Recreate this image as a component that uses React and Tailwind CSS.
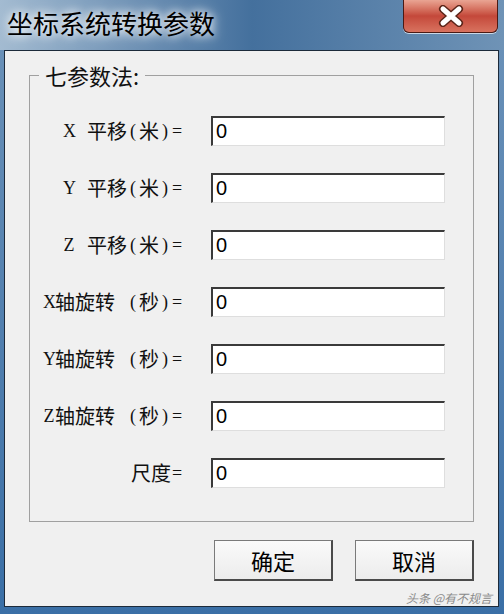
import React from "react";

const rows = [
  "X 平移(米)=",
  "Y 平移(米)=",
  "Z 平移(米)=",
  "X轴旋转 (秒)=",
  "Y轴旋转 (秒)=",
  "Z轴旋转 (秒)=",
  "尺度=",
];

// ASCII chars get a fixed cell, like the old SimSun look
function Label({ text }) {
  return (
    <div className="w-[153px] h-[30px] flex items-center justify-end text-[20px] leading-[30px] text-[#111] whitespace-nowrap">
      {text.split("").map((c, i) =>
        c.charCodeAt(0) < 128 ? (
          <span
            key={i}
            className="w-[12px] shrink-0 text-center text-[18px] [font-family:'Liberation_Serif',serif]"
          >
            {c === " " ? "\u00a0" : c}
          </span>
        ) : (
          <span key={i} className="shrink-0">{c}</span>
        )
      )}
    </div>
  );
}

function CloseButton() {
  return (
    <div className="w-[95px] h-[33px] mr-[6px] rounded-b-[6px] border border-t-0 border-[#4a1a14] bg-gradient-to-b from-[#e9a493] via-[#c4483a] to-[#d8725f] flex items-center justify-center shadow-[0_1px_0_#c9d8e8]">
      <svg width="30" height="22" viewBox="0 0 30 22">
        <path d="M7 4 L23 18 M23 4 L7 18" stroke="#5b2418" strokeWidth="8" strokeLinecap="round" />
        <path d="M7 4 L23 18 M23 4 L7 18" stroke="#ffffff" strokeWidth="5" strokeLinecap="round" />
      </svg>
    </div>
  );
}

export default function App() {
  return (
    <div className="w-[504px] h-[614px] flex flex-col bg-gradient-to-b from-[#6d93b9] to-[#3a6fa6] [font-family:'Noto_Sans_CJK_SC',sans-serif]">
      {/* title bar */}
      <div className="h-[50px] flex items-start justify-between bg-gradient-to-r from-[#a3bbd1] via-[#44709d] to-[#6f93b6]">
        <div className="pl-[7px] pt-[6px] text-[26px] leading-[34px] text-black [text-shadow:0_0_8px_#ffffff,0_0_14px_#ffffff]">
          坐标系统转换参数
        </div>
        <CloseButton />
      </div>

      {/* client area */}
      <div className="relative ml-[4px] mr-[5px] mb-[7px] flex-1 border border-[#1c2a3a] bg-[#f0f0f0] px-[24px] pt-[11px]">
        <fieldset className="border border-[#a0a0a0] px-0 pt-[28px] pb-[33px]">
          <legend className="ml-[9px] px-[6px] text-[22px] leading-[26px] text-[#111]">
            七参数法:
          </legend>
          <div className="flex flex-col gap-[27px]">
            {rows.map((label) => (
              <div key={label} className="flex items-center">
                <Label text={label} />
                <div className="ml-[28px] w-[234px] h-[30px] bg-white border-t-2 border-l-2 border-r border-b border-t-[#3a3a3a] border-l-[#3a3a3a] border-r-[#dedede] border-b-[#dedede] pl-[3px] text-[20px] leading-[27px] text-black [font-family:'Liberation_Sans',sans-serif]">
                  0
                </div>
              </div>
            ))}
          </div>
        </fieldset>

        <div className="flex justify-end gap-[22px] mt-[18px]">
          {["确定", "取消"].map((t) => (
            <div
              key={t}
              className="w-[119px] h-[41px] flex items-center justify-center bg-gradient-to-b from-[#fafafa] to-[#ececec] border border-[#7a7a7a] border-r-2 border-b-2 border-r-[#4a4a4a] border-b-[#4a4a4a] text-[22px] text-black"
            >
              {t}
            </div>
          ))}
        </div>

        <div className="absolute right-[6px] bottom-[1px] text-[12px] leading-[14px] italic text-[#8a8a8a]">
          头条 @有不规言
        </div>
      </div>
    </div>
  );
}
